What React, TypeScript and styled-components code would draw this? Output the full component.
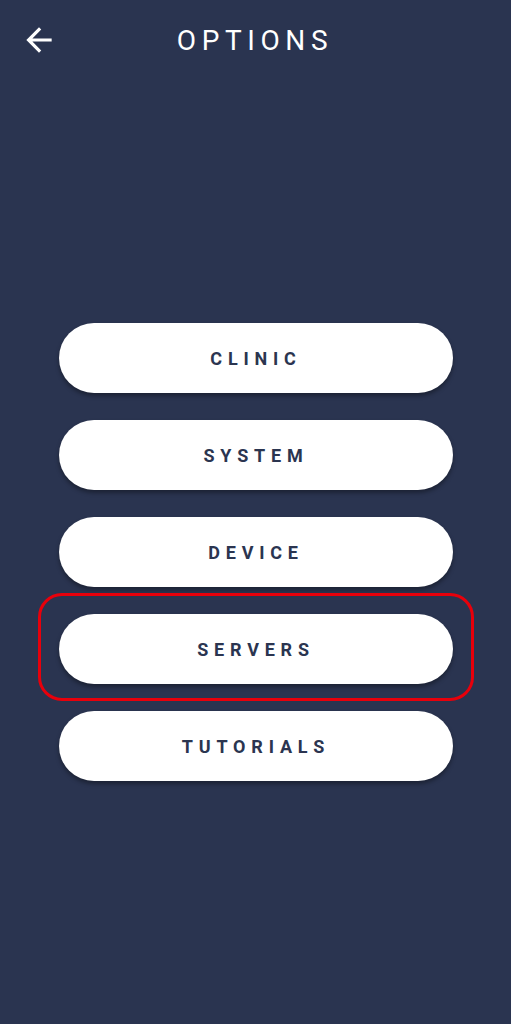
import React from "react";
import styled, { createGlobalStyle } from "styled-components";

const GlobalStyle = createGlobalStyle`
  html, body {
    margin: 0;
    padding: 0;
    background: #2a3450;
  }
  body {
    font-family: Roboto, "Noto Sans", sans-serif;
  }
`;

const Screen = styled.div`
  min-height: 1024px;
  background: #2a3450;
  display: flex;
  flex-direction: column;
`;

const Header = styled.header`
  position: relative;
  height: 80px;
  display: flex;
  align-items: center;
  justify-content: center;
`;

const BackButton = styled.button`
  position: absolute;
  left: 20px;
  top: 21px;
  width: 38px;
  height: 38px;
  padding: 0;
  border: none;
  background: none;
  color: #ffffff;
  display: flex;
  cursor: pointer;
`;

const Title = styled.h1`
  margin: 0;
  padding-right: 1px;
  color: #ffffff;
  font-family: Roboto, sans-serif;
  font-weight: 400;
  font-size: 28px;
  letter-spacing: 5.6px;
`;

const Menu = styled.nav`
  display: flex;
  flex-direction: column;
  align-items: center;
  gap: 27px;
  padding-top: 243px;
`;

const Slot = styled.div<{ $highlight?: boolean }>`
  position: relative;
  &::after {
    content: "";
    display: ${(p) => (p.$highlight ? "block" : "none")};
    position: absolute;
    inset: -21px -21px -17px -21px;
    border: 3px solid #e8000b;
    border-radius: 24px;
    pointer-events: none;
  }
`;

const OptionButton = styled.button`
  width: 394px;
  height: 70px;
  border: none;
  border-radius: 35px;
  background: #ffffff;
  box-shadow: 0 3px 4px rgba(0, 0, 0, 0.35);
  color: #2b3550;
  font-family: Roboto, sans-serif;
  font-weight: 700;
  font-size: 18px;
  letter-spacing: 5.8px;
  padding: 0 0 0 1px;
  cursor: pointer;
`;

const options = ["CLINIC", "SYSTEM", "DEVICE", "SERVERS", "TUTORIALS"];

export default function App() {
  return (
    <Screen>
      <GlobalStyle />
      <Header>
        <BackButton aria-label="Back">
          <svg viewBox="0 0 24 24" width="38" height="38" fill="currentColor">
            <path d="M20 11H7.83l5.59-5.59L12 4l-8 8 8 8 1.41-1.41L7.83 13H20v-2z" />
          </svg>
        </BackButton>
        <Title>OPTIONS</Title>
      </Header>
      <Menu>
        {options.map((label) => (
          <Slot key={label} $highlight={label === "SERVERS"}>
            <OptionButton>{label}</OptionButton>
          </Slot>
        ))}
      </Menu>
    </Screen>
  );
}
